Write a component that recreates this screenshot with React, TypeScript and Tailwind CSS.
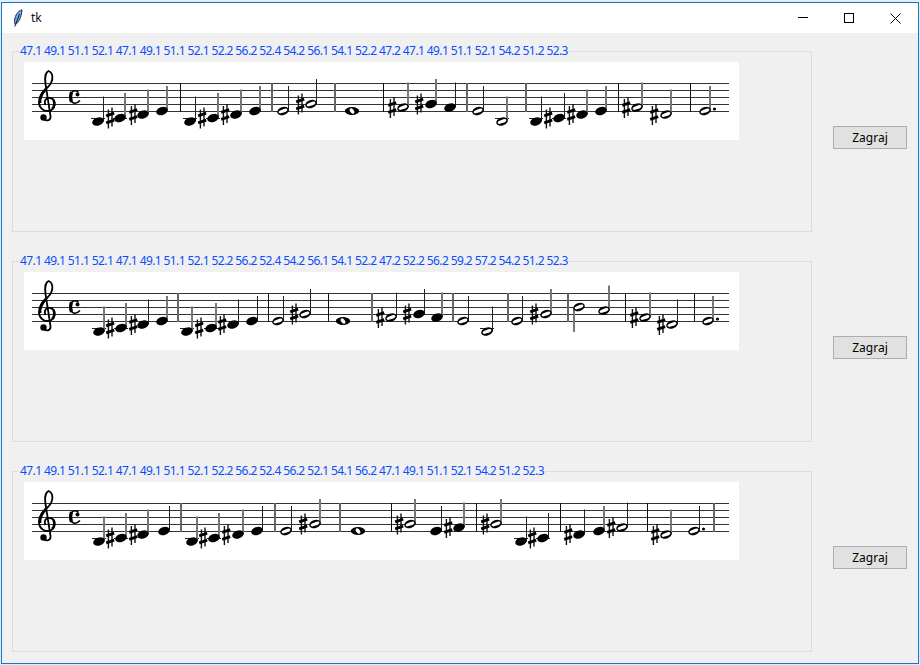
type Note = [x: number, pitch: number, dur: number, sharpX: number, gray: number];

const PITCH_Y: Record<number, number> = { 47: 121.5, 49: 118, 51: 114.5, 52: 111, 54: 107.5, 56: 104, 57: 100.5, 59: 97 };

interface Row {
  label: string;
  bars: [number, number][];
  notes: Note[];
}

const rows: Row[] = [
  {
    label: "47.1 49.1 51.1 52.1 47.1 49.1 51.1 52.1 52.2 56.2 52.4 54.2 56.1 54.1 52.2 47.2 47.1 49.1 51.1 52.1 54.2 51.2 52.3",
    bars: [[180, 0], [272, 1], [335, 1], [383, 0], [467, 1], [526, 1], [618, 0], [690, 0]],
    notes: [
      [98, 47, 1, 0, 0], [120, 49, 1, 110, 1], [143, 51, 1, 133, 1], [162, 52, 1, 0, 1],
      [190, 47, 1, 0, 0], [213, 49, 1, 202, 1], [236, 51, 1, 225, 1], [255, 52, 1, 0, 1],
      [283, 52, 2, 0, 0], [311, 56, 2, 300, 0], [352, 52, 4, 0, 0],
      [403, 54, 2, 392, 1], [431, 56, 1, 419, 1], [450, 54, 1, 0, 0],
      [478, 52, 2, 0, 0], [502, 47, 2, 0, 1],
      [536, 47, 1, 0, 0], [559, 49, 1, 548, 0], [582, 51, 1, 571, 1], [601, 52, 1, 0, 1],
      [637, 54, 2, 626, 1], [666, 51, 2, 654, 1], [705, 52, 3, 0, 1],
    ],
  },
  {
    label: "47.1 49.1 51.1 52.1 47.1 49.1 51.1 52.1 52.2 56.2 52.4 54.2 56.1 54.1 52.2 47.2 52.2 56.2 59.2 57.2 54.2 51.2 52.3",
    bars: [[178, 1], [268, 0], [328, 0], [372, 1], [453, 1], [508, 1], [568, 1], [625, 0], [694, 0]],
    notes: [
      [99, 47, 1, 0, 1], [121, 49, 1, 110, 1], [143, 51, 1, 133, 0], [162, 52, 1, 0, 1],
      [187, 47, 1, 0, 1], [211, 49, 1, 199, 1], [233, 51, 1, 222, 0], [252, 52, 1, 0, 0],
      [278, 52, 2, 0, 0], [305, 56, 2, 294, 0], [343, 52, 4, 0, 0],
      [391, 54, 2, 380, 0], [419, 56, 1, 407, 0], [437, 54, 1, 0, 1],
      [463, 52, 2, 0, 0], [487, 47, 2, 0, 0],
      [517, 52, 2, 0, 0], [546, 56, 2, 534, 1], [579, 59, -2, 0, 1], [604, 57, 2, 0, 1],
      [645, 54, 2, 634, 1], [672, 51, 2, 661, 0], [708, 52, 3, 0, 1],
    ],
  },
  {
    label: "47.1 49.1 51.1 52.1 47.1 49.1 51.1 52.1 52.2 56.2 52.4 56.2 52.1 54.1 56.2 47.1 49.1 51.1 52.1 54.2 51.2 52.3",
    bars: [[181, 1], [275, 1], [340, 1], [391, 0], [476, 0], [560, 0], [647, 0], [714, 1]],
    notes: [
      [99, 47, 1, 0, 1], [121, 49, 1, 110, 1], [143, 51, 1, 133, 1], [164, 52, 1, 0, 0],
      [192, 47, 1, 0, 1], [214, 49, 1, 203, 1], [238, 51, 1, 226, 1], [257, 52, 1, 0, 0],
      [286, 52, 2, 0, 0], [315, 56, 2, 303, 1], [358, 52, 4, 0, 0],
      [410, 56, 2, 399, 1], [436, 52, 1, 0, 0], [459, 54, 1, 448, 1],
      [496, 56, 2, 485, 1], [521, 47, 1, 0, 0], [543, 49, 1, 532, 0],
      [579, 51, 1, 568, 0], [599, 52, 1, 0, 1], [622, 54, 2, 611, 0],
      [666, 51, 2, 655, 1], [694, 52, 3, 0, 0],
    ],
  },
];

function Sharp({ x, y }: { x: number; y: number }) {
  return (
    <g>
      <path d={`M${x - 1.6} ${y - 8.5}V${y + 10.5}M${x + 2} ${y - 10.5}V${y + 8.5}`} stroke="#111" strokeWidth="1.4" />
      <path d={`M${x - 3.8} ${y - 2.2}L${x + 4.2} ${y - 4.8}M${x - 3.8} ${y + 4.8}L${x + 4.2} ${y + 2.2}`} stroke="#000" strokeWidth="2.8" />
    </g>
  );
}

function Head({ x, y, dur }: { x: number; y: number; dur: number }) {
  if (dur === 4) {
    return (
      <g>
        <ellipse cx={x} cy={y} rx="7.2" ry="4" fill="#000" />
        <ellipse cx={x} cy={y} rx="1.9" ry="3" fill="#fff" transform={`rotate(-35 ${x} ${y})`} />
      </g>
    );
  }
  const open = Math.abs(dur) >= 2;
  return (
    <g transform={`rotate(-20 ${x} ${y})`}>
      <ellipse cx={x} cy={y} rx="6" ry="4" fill="#000" />
      {open && <ellipse cx={x} cy={y} rx="4.6" ry="1.7" fill="#fff" />}
    </g>
  );
}

function Staff({ row }: { row: Row }) {
  return (
    <svg className="block" width="715" height="78" viewBox="24 62 715 78">
      {[83, 90, 97, 104, 111].map((y) => (
        <rect key={y} x="32" y={y} width="697" height="1" fill="#333" />
      ))}
      {row.bars.map(([x, gray]) =>
        gray ? (
          <rect key={x} x={x - 1} y="83" width="2" height="29" fill="#666" />
        ) : (
          <rect key={x} x={x} y="83" width="1" height="29" fill="#111" />
        ),
      )}
      <path
        d="M43 117.5C45 122 51 121 50.5 116L45.5 84C44.5 77 46 72 48.5 71C53 72.5 54.5 80 48 87C42.5 92 38.5 96 39 103C40 110 46 112 50.5 110.5C56 108 56 99 50 98C46 97.5 43.5 101 45.5 105"
        fill="none"
        stroke="#000"
        strokeWidth="1.8"
      />
      <path d="M46 89C42 93 39.5 97 40 103" fill="none" stroke="#000" strokeWidth="2.8" />
      <path d="M53.5 100C55 103 54.5 107 52 109" fill="none" stroke="#000" strokeWidth="2.6" />
      <circle cx="43.5" cy="117.5" r="3.2" fill="#000" />
      <path d="M78.5 92.5C76 89.5 70.5 90 70.5 97C70.5 104 76 105 80 100.5" fill="none" stroke="#000" strokeWidth="1.6" />
      <path d="M71.5 92Q69.6 97 71.5 102" fill="none" stroke="#000" strokeWidth="3.2" />
      <circle cx="77.5" cy="94.5" r="2" fill="#000" />
      {row.notes.map(([x, pitch, dur, sharpX, gray]) => {
        const y = PITCH_Y[pitch];
        const down = dur < 0;
        const stemX = down ? x - 5 : x + 5;
        return (
          <g key={x}>
            {y >= 118 && <rect x={x - 7} y="118" width="14" height="1" fill="#222" />}
            {dur !== 4 &&
              (gray ? (
                <rect x={stemX - 1} y={down ? y : y - 25} width="2" height="25" fill="#777" />
              ) : (
                <rect x={stemX} y={down ? y : y - 25} width="1" height="25" fill="#222" />
              ))}
            <Head x={x} y={y} dur={dur} />
            {dur === 3 && <circle cx={x + 9.5} cy={y - 2} r="1.6" fill="#000" />}
            {sharpX > 0 && <Sharp x={sharpX} y={y} />}
          </g>
        );
      })}
    </svg>
  );
}

function Feather() {
  return (
    <svg width="10" height="18" viewBox="0 0 10 18">
      <path d="M9 0.8C5 2 2.2 6 1.6 11C1.4 13 1.6 14.5 2.2 15.5C5.5 14 8.2 9 9 0.8Z" fill="#6fa8ec" stroke="#1c2a4a" strokeWidth="1" />
      <path d="M6.5 5L1.8 17.5" stroke="#10182e" strokeWidth="1" />
    </svg>
  );
}

export default function App() {
  return (
    <div className="h-[665px] w-[920px] overflow-hidden bg-[#e8ebee] pl-px pt-[2px] font-['Noto_Sans',sans-serif]">
      <div className="flex h-[662px] w-[918px] flex-col border border-[#0f78c8]">
        <div className="flex h-[30px] shrink-0 items-center bg-white">
          <div className="ml-[11px] w-[18px]">
            <Feather />
          </div>
          <span className="text-[12px] text-[#1a0a20]">tk</span>
          <div className="ml-auto flex">
            <button className="flex h-[30px] w-[46px] items-center justify-center">
              <svg width="10" height="10">
                <rect x="0" y="4" width="10" height="1" fill="#000" />
              </svg>
            </button>
            <button className="flex h-[30px] w-[46px] items-center justify-center">
              <svg width="10" height="10">
                <rect x="0.5" y="0.5" width="9" height="9" fill="none" stroke="#000" />
              </svg>
            </button>
            <button className="flex h-[30px] w-[46px] items-center justify-center">
              <svg width="11" height="11">
                <path d="M0.5 0.5L10.5 10.5M10.5 0.5L0.5 10.5" stroke="#000" />
              </svg>
            </button>
          </div>
        </div>
        <div className="flex flex-1 flex-col gap-[29px] bg-[#f0f0f0] pl-[10px] pt-[18px]">
          {rows.map((row) => (
            <div key={row.label} className="flex items-start">
              <div className="h-[181px] w-[800px] border border-[#dcdcdc] pl-[11px]">
                <div className="-ml-[5px] -mt-[9px] h-[16px] w-fit bg-[#f0f0f0] px-px text-[12px] leading-[16px] tracking-[-0.6px] whitespace-nowrap text-[#0b4dff]">
                  {row.label}
                </div>
                <div className="mt-[3px] w-fit bg-white">
                  <Staff row={row} />
                </div>
              </div>
              <button className="ml-[21px] mt-[75px] h-[23px] w-[74px] border border-[#adadad] bg-[#e1e1e1] text-[12px] leading-none text-black">
                Zagraj
              </button>
            </div>
          ))}
        </div>
      </div>
    </div>
  );
}
